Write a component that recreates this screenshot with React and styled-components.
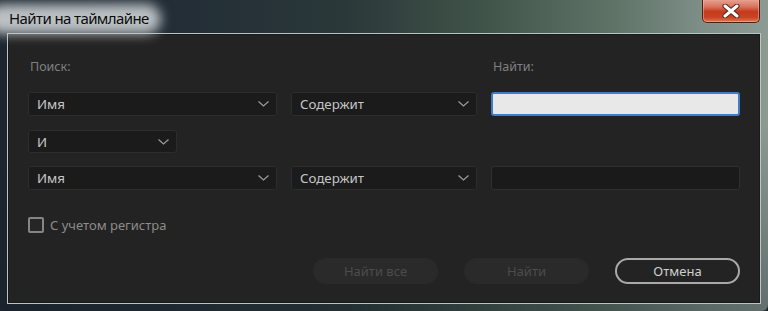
import React from "react";
import styled, { createGlobalStyle } from "styled-components";

const Global = createGlobalStyle`
  html, body { margin: 0; padding: 0; background: #1c252d; }
  body { width: 768px; height: 311px; overflow: hidden; font-family: "Noto Sans", "Open Sans", sans-serif; }
  * { box-sizing: border-box; }
`;

const Window = styled.div`
  width: 768px;
  height: 311px;
  display: flex;
  flex-direction: column;
  border-radius: 0 0 6px 6px;
  overflow: hidden;
  background:
    linear-gradient(180deg, rgba(0,0,0,0) 0%, rgba(0,0,0,0) 40%, rgba(20,30,38,0.35) 100%),
    linear-gradient(90deg, #1d2630 0%, #222d36 22%, #2b3839 45%, #3f5248 62%, #5f7367 80%, #7f9088 92%, #8c9a93 100%);
`;

const TitleBar = styled.div`
  height: 33px;
  flex: none;
  display: flex;
  align-items: flex-start;
  justify-content: space-between;
`;

const Title = styled.div`
  position: relative;
  z-index: 0;
  margin: 8px 0 0 9px;
  font-size: 15px;
  line-height: 20px;
  color: #0c0c0c;
  letter-spacing: -0.6px;
  &::before {
    content: "";
    position: absolute;
    left: -22px;
    right: -12px;
    top: -4px;
    bottom: -6px;
    border-radius: 16px;
    background: rgba(196, 201, 203, 0.95);
    filter: blur(6px);
    z-index: -1;
  }
`;

const CloseButton = styled.div`
  width: 58px;
  height: 24px;
  margin: -1px 8px 0 0;
  border: 1px solid #4a1f16;
  border-top: none;
  border-radius: 0 0 5px 5px;
  background: linear-gradient(180deg, #e9a896 0%, #d8705a 35%, #c43a1c 55%, #c94424 80%, #e07a52 100%);
  box-shadow: inset 0 0 0 1px rgba(255, 200, 180, 0.45), 0 0 1px rgba(255,255,255,0.4);
  display: flex;
  align-items: center;
  justify-content: center;
`;

const Client = styled.div`
  flex: 1;
  margin: 0 7px 7px 7px;
  border: 1px solid rgba(214, 224, 224, 0.85);
  background: #232323;
  padding: 24px 20px 0 20px;
  display: flex;
  flex-direction: column;
  box-shadow: inset 0 0 0 1px #1a1a1a;
`;

const Grid = styled.div`
  display: grid;
  grid-template-columns: 249px 186px 249px;
  column-gap: 14px;
`;

const Label = styled.div`
  font-size: 12.5px;
  line-height: 18px;
  color: #808080;
  padding-left: 2px;
  grid-column: ${(p) => p.$col};
`;

const Row = styled(Grid)`
  margin-top: ${(p) => p.$top}px;
`;

const Select = styled.div`
  height: ${(p) => p.$h || 24}px;
  width: ${(p) => (p.$w ? `${p.$w}px` : "auto")};
  background: #1b1b1b;
  border: 1px solid #2d2d2d;
  border-radius: 3px;
  display: flex;
  align-items: center;
  justify-content: space-between;
  padding: 0 7px 0 8px;
  font-size: 13.3px;
  color: #c6c6c6;
`;

const Input = styled.div`
  height: ${(p) => p.$h || 24}px;
  border-radius: 3px;
  background: ${(p) => (p.$focused ? "#e8e8e8" : "#1a1a1a")};
  border: ${(p) => (p.$focused ? "2px solid #3f7dcc" : "1px solid #2f2f2f")};
`;

const CheckRow = styled.label`
  margin-top: 26px;
  display: flex;
  align-items: center;
  gap: 6px;
  font-size: 13px;
  color: #8c8c8c;
  height: 18px;
`;

const Box = styled.span`
  width: 16px;
  height: 16px;
  border: 2px solid #858585;
  border-radius: 2px;
  background: #262626;
`;

const Buttons = styled.div`
  margin-top: 24px;
  display: flex;
  justify-content: flex-end;
  gap: 26px;
`;

const Button = styled.div`
  width: 125px;
  height: 26px;
  border-radius: 13px;
  display: flex;
  align-items: center;
  justify-content: center;
  font-size: 13px;
  background: ${(p) => (p.$disabled ? "#2a2a2a" : "#232323")};
  color: ${(p) => (p.$disabled ? "#4c4c4c" : "#cfcfcf")};
  border: 2px solid ${(p) => (p.$disabled ? "#2a2a2a" : "#a9a9a9")};
`;

const Chevron = () => (
  <svg width="11" height="6" viewBox="0 0 11 6">
    <path d="M0.5 0.5 L5.5 5 L10.5 0.5" fill="none" stroke="#9c9c9c" strokeWidth="1.2" />
  </svg>
);

const CloseX = () => (
  <svg width="18" height="14" viewBox="0 0 18 14">
    <path d="M3 2 L15 12 M15 2 L3 12" stroke="#5a2418" strokeWidth="5" strokeLinecap="round" />
    <path d="M3 2 L15 12 M15 2 L3 12" stroke="#ffffff" strokeWidth="3" strokeLinecap="round" />
  </svg>
);

const Dropdown = ({ text, w, h }) => (
  <Select $w={w} $h={h}>
    <span>{text}</span>
    <Chevron />
  </Select>
);

export default function App() {
  return (
    <>
      <Global />
      <Window>
        <TitleBar>
          <Title>Найти на таймлайне</Title>
          <CloseButton>
            <CloseX />
          </CloseButton>
        </TitleBar>
        <Client>
          <Grid>
            <Label $col={1}>Поиск:</Label>
            <Label $col={3}>Найти:</Label>
          </Grid>
          <Row $top={16}>
            <Dropdown text="Имя" />
            <Dropdown text="Содержит" />
            <Input $focused />
          </Row>
          <Row $top={14}>
            <Dropdown text="И" w={149} h={23} />
          </Row>
          <Row $top={13}>
            <Dropdown text="Имя" />
            <Dropdown text="Содержит" />
            <Input />
          </Row>
          <CheckRow>
            <Box />
            С учетом регистра
          </CheckRow>
          <Buttons>
            <Button $disabled>Найти все</Button>
            <Button $disabled>Найти</Button>
            <Button>Отмена</Button>
          </Buttons>
        </Client>
      </Window>
    </>
  );
}
